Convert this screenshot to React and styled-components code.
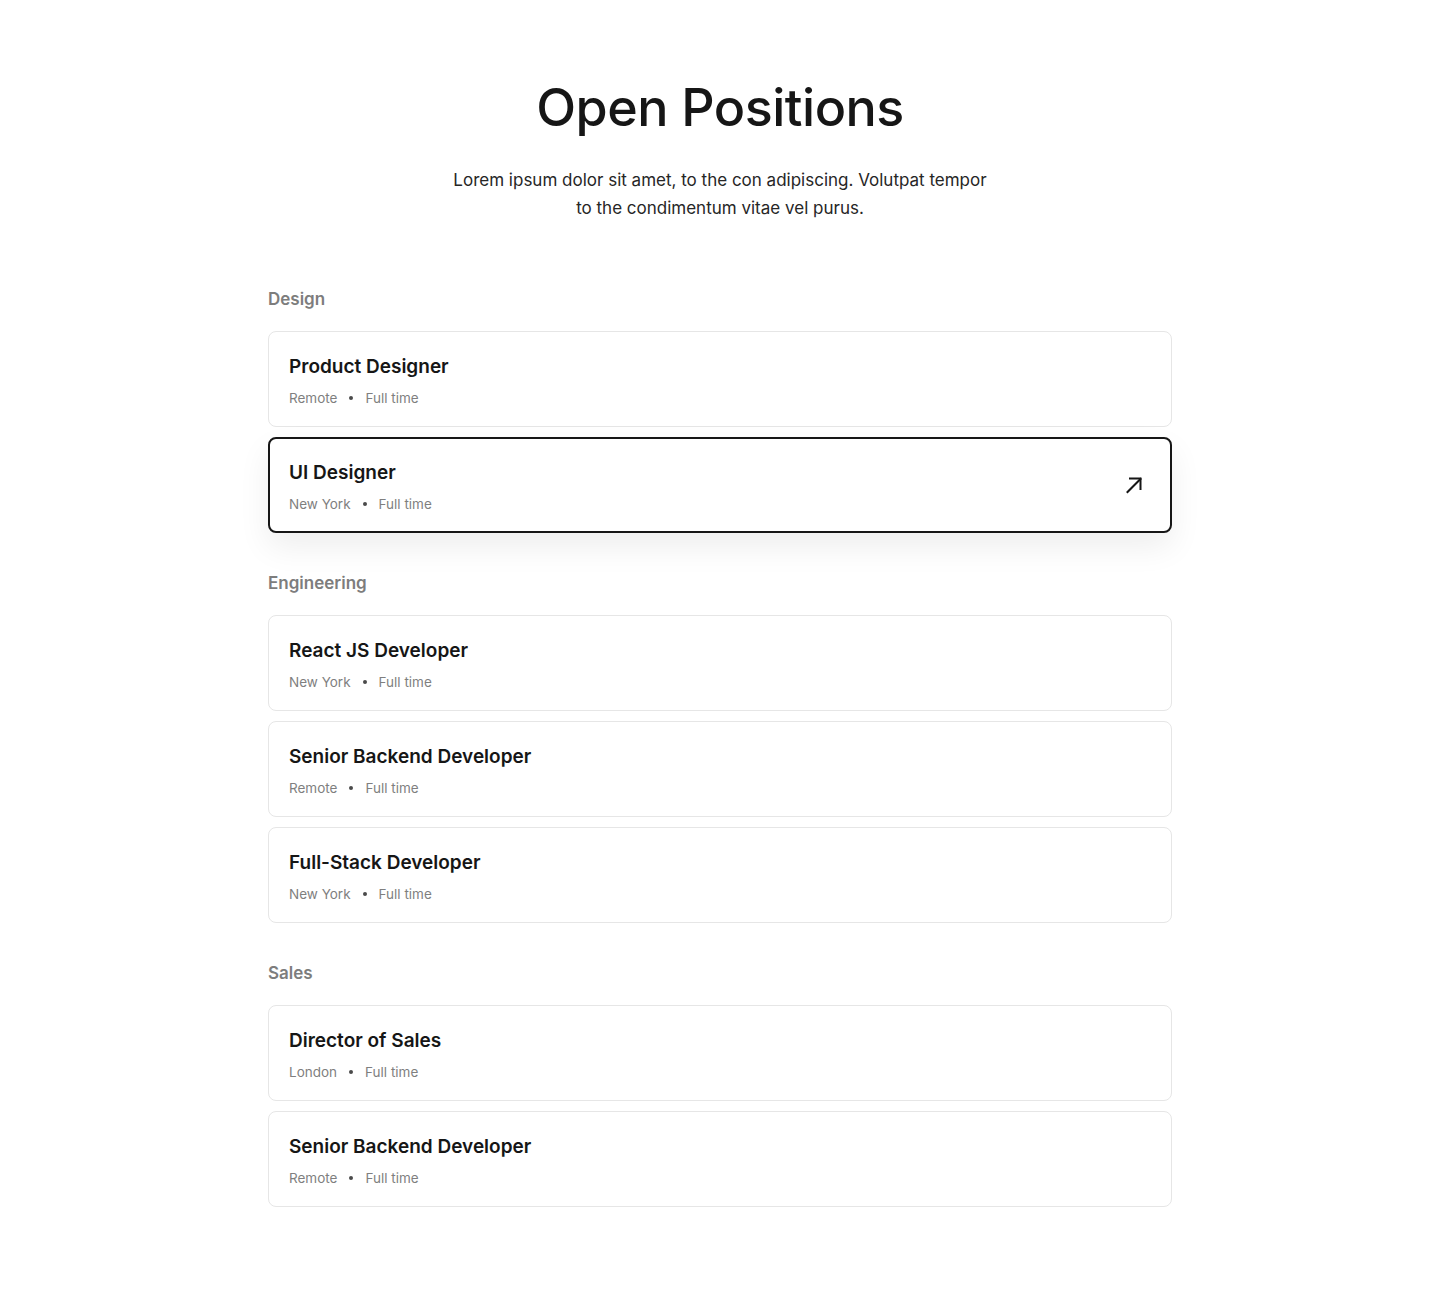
import React from "react";
import styled, { createGlobalStyle } from "styled-components";

const Global = createGlobalStyle`
  * { box-sizing: border-box; }
  body {
    margin: 0;
    background: #ffffff;
    font-family: Inter, "Noto Sans", "Liberation Sans", sans-serif;
    color: #161616;
  }
`;

const Page = styled.main`
  width: 904px;
  margin: 0 auto;
  padding: 76px 0 100px;
`;

const Header = styled.header`
  display: flex;
  flex-direction: column;
  align-items: center;
  text-align: center;
  margin-bottom: 65px;
`;

const Title = styled.h1`
  margin: 0;
  font-size: 52px;
  line-height: 64px;
  font-weight: 500;
  letter-spacing: -0.5px;
  color: #161616;
`;

const Lead = styled.p`
  margin: 26px 0 0;
  max-width: 560px;
  font-size: 17px;
  line-height: 28px;
  color: #262626;
`;

const Section = styled.section`
  display: flex;
  flex-direction: column;
  gap: 10px;
  & + & {
    margin-top: 38px;
  }
`;

const SectionLabel = styled.h2`
  margin: 0 0 10px;
  font-size: 17px;
  line-height: 24px;
  font-weight: 600;
  color: #7d7d7d;
`;

const Card = styled.a`
  display: flex;
  align-items: center;
  justify-content: space-between;
  height: 96px;
  padding: 0 ${(p) => (p.$active ? "24px" : "25px")} 0 ${(p) => (p.$active ? "19px" : "20px")};
  border: ${(p) => (p.$active ? "2px solid #161616" : "1px solid #e6e6e6")};
  border-radius: 8px;
  background: #fff;
  text-decoration: none;
  color: inherit;
  box-shadow: ${(p) =>
    p.$active ? "0 14px 32px rgba(0, 0, 0, 0.07)" : "none"};
`;

const CardText = styled.div`
  display: flex;
  flex-direction: column;
  gap: 9px;
  padding-top: 2px;
`;

const JobTitle = styled.h3`
  margin: 0;
  font-size: 19px;
  line-height: 26px;
  font-weight: 600;
  color: #161616;
`;

const Meta = styled.div`
  display: flex;
  align-items: center;
  gap: 12px;
  font-size: 13.5px;
  line-height: 18px;
  color: #7f7f7f;
`;

const Dot = styled.span`
  width: 4px;
  height: 4px;
  border-radius: 50%;
  background: #4a4a4a;
`;

const Arrow = () => (
  <svg width="24" height="24" viewBox="0 0 24 24" fill="none" stroke="#161616" strokeWidth="2" strokeLinecap="square">
    <path d="M5.5 19 L18.5 6" />
    <path d="M8 5.5 H18.5 V16" />
  </svg>
);

const sections = [
  {
    name: "Design",
    jobs: [
      { title: "Product Designer", loc: "Remote" },
      { title: "UI Designer", loc: "New York", active: true },
    ],
  },
  {
    name: "Engineering",
    jobs: [
      { title: "React JS Developer", loc: "New York" },
      { title: "Senior Backend Developer", loc: "Remote" },
      { title: "Full-Stack Developer", loc: "New York" },
    ],
  },
  {
    name: "Sales",
    jobs: [
      { title: "Director of Sales", loc: "London" },
      { title: "Senior Backend Developer", loc: "Remote" },
    ],
  },
];

export default function App() {
  return (
    <>
      <Global />
      <Page>
        <Header>
          <Title>Open Positions</Title>
          <Lead>
            Lorem ipsum dolor sit amet, to the con adipiscing. Volutpat tempor
            <br />
            to the condimentum vitae vel purus.
          </Lead>
        </Header>
        {sections.map((s) => (
          <Section key={s.name}>
            <SectionLabel>{s.name}</SectionLabel>
            {s.jobs.map((j, i) => (
              <Card key={i} $active={j.active} href="#">
                <CardText>
                  <JobTitle>{j.title}</JobTitle>
                  <Meta>
                    <span>{j.loc}</span>
                    <Dot />
                    <span>Full time</span>
                  </Meta>
                </CardText>
                {j.active && <Arrow />}
              </Card>
            ))}
          </Section>
        ))}
      </Page>
    </>
  );
}
